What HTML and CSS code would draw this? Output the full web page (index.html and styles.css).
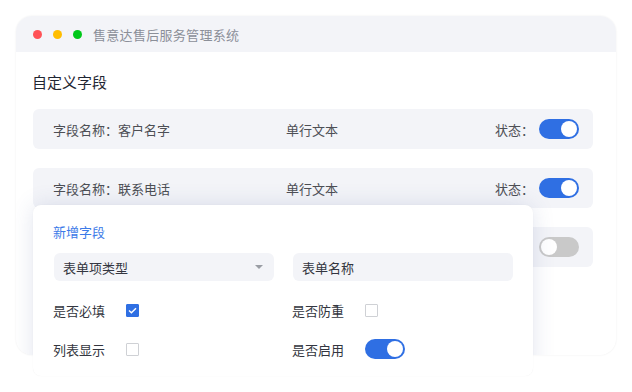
FILE: index.html
```html
<!DOCTYPE html>
<html lang="zh-CN">
<head>
    <meta charset="UTF-8">
    <title>售意达售后服务管理系统</title>
    <link rel="stylesheet" href="styles.css">
</head>
<body>
    <div class="page">
        <div class="window">
            <!-- Title bar -->
            <div class="titlebar">
                <span class="dot red"></span>
                <span class="dot yellow"></span>
                <span class="dot green"></span>
                <span class="title">售意达售后服务管理系统</span>
            </div>

            <!-- Field list -->
            <div class="content">
                <div class="heading">自定义字段</div>
                <div class="field-row">
                    <span class="field-name">字段名称：客户名字</span>
                    <span class="field-type">单行文本</span>
                    <span class="field-status">状态：<span class="switch on"></span></span>
                </div>
                <div class="field-row">
                    <span class="field-name">字段名称：联系电话</span>
                    <span class="field-type">单行文本</span>
                    <span class="field-status">状态：<span class="switch on"></span></span>
                </div>
                <!-- third row is mostly under the popup, only its switch shows -->
                <div class="field-row">
                    <span class="field-name"></span>
                    <span class="field-type"></span>
                    <span class="field-status"><span class="switch"></span></span>
                </div>
            </div>

            <!-- shadow of the popup, clipped to the window -->
            <div class="shade"><div class="shade-box"></div></div>

            <!-- Add field popup -->
            <div class="popup">
                <div class="popup-title">新增字段</div>
                <div class="form-grid">
                    <div class="select">表单项类型<span class="caret"></span></div>
                    <div class="input">表单名称</div>
                    <div class="option">
                        <span class="option-label">是否必填</span>
                        <span class="check checked">
                            <svg width="9" height="7" viewBox="0 0 9 7"><path d="M1 3.6 L3.4 5.8 L8 1.2" fill="none" stroke="#fff" stroke-width="1.4"/></svg>
                        </span>
                    </div>
                    <div class="option">
                        <span class="option-label">是否防重</span>
                        <span class="check"></span>
                    </div>
                    <div class="option">
                        <span class="option-label">列表显示</span>
                        <span class="check"></span>
                    </div>
                    <div class="option">
                        <span class="option-label">是否启用</span>
                        <span class="switch on"></span>
                    </div>
                </div>
            </div>
        </div>
    </div>
</body>
</html>
```

FILE: styles.css
```css
body {
    margin: 0;
    padding: 0;
    background: #ffffff;
    font-family: "Noto Sans CJK SC", "Noto Sans", sans-serif;
}

.page {
    height: 392px;
    box-sizing: border-box;
    padding: 16px 0 0 16px;
}

.window {
    position: relative;
    width: 600px;
    height: 339px;
    background: #ffffff;
    border-radius: 16px;
    box-shadow: 0 0 2px rgba(0, 0, 0, 0.08);
}

/* Title bar */
.titlebar {
    height: 36px;
    background: #f3f4f8;
    border-radius: 16px 16px 0 0;
    display: flex;
    align-items: center;
    padding-left: 17px;
}

.dot {
    flex: none;
    width: 9px;
    height: 9px;
    border-radius: 50%;
    margin-right: 11px;
}

.red { background: #ff5257; }
.yellow { background: #ffbd00; }
.green { background: #00c81a; }

.title {
    font-size: 13px;
    color: #8b8f98;
    letter-spacing: 0.3px;
}

/* Field list */
.content {
    padding: 19px 0 0 17px;
}

.heading {
    font-size: 15px;
    line-height: 22px;
    color: #1f2633;
    margin-left: -1px;
    margin-bottom: 16px;
}

.field-row {
    width: 560px;
    height: 40px;
    box-sizing: border-box;
    background: #f3f4f8;
    border-radius: 6px;
    display: flex;
    align-items: center;
    padding: 0 14px 0 20px;
    margin-bottom: 19px;
    font-size: 13px;
    color: #4d4f55;
}

.field-name {
    width: 233px;
}

.field-type {
    flex: 1;
}

.field-status {
    display: flex;
    align-items: center;
    gap: 5px;
}

/* Switch */
.switch {
    position: relative;
    display: inline-block;
    width: 40px;
    height: 20px;
    border-radius: 10px;
    background: #c9c9c9;
}

.switch::after {
    content: "";
    position: absolute;
    top: 2px;
    left: 2px;
    width: 16px;
    height: 16px;
    border-radius: 50%;
    background: #ffffff;
}

.switch.on {
    background: #2f6fe3;
}

.switch.on::after {
    left: 22px;
}

/* Popup shadow */
.shade {
    position: absolute;
    top: 0;
    left: 0;
    right: 0;
    bottom: 0;
    border-radius: 16px;
    overflow: hidden;
    pointer-events: none;
}

.shade-box {
    position: absolute;
    left: 17px;
    top: 189px;
    width: 500px;
    height: 171px;
    border-radius: 8px;
    box-shadow: 0 0 22px rgba(60, 80, 150, 0.15);
}

/* Popup */
.popup {
    position: absolute;
    left: 17px;
    top: 189px;
    width: 500px;
    height: 171px;
    box-sizing: border-box;
    background: #ffffff;
    border-radius: 8px;
    box-shadow: 0 0 1px rgba(0, 0, 0, 0.08);
    padding: 17px 20px 0 21px;
}

.popup-title {
    font-size: 13px;
    line-height: 20px;
    color: #3b7ae8;
    margin-left: -1px;
    margin-bottom: 11px;
}

.form-grid {
    display: grid;
    grid-template-columns: 220px 220px;
    column-gap: 19px;
    row-gap: 19px;
}

.select,
.input {
    height: 28px;
    box-sizing: border-box;
    background: #f3f4f8;
    border-radius: 6px;
    padding: 0 10px 0 9px;
    display: flex;
    align-items: center;
    font-size: 13px;
    color: #333640;
}

.select {
    justify-content: space-between;
}

.caret {
    width: 0;
    height: 0;
    border-left: 4px solid transparent;
    border-right: 4px solid transparent;
    border-top: 4px solid #9a9da4;
    margin-right: 1px;
}

.option {
    display: flex;
    align-items: center;
    height: 20px;
    font-size: 13px;
    color: #333640;
    margin-left: -1px;
}

.option-label {
    width: 73px;
}

.check {
    width: 13px;
    height: 13px;
    box-sizing: border-box;
    border: 1px solid #cfd1d5;
    border-radius: 1px;
    display: flex;
    align-items: center;
    justify-content: center;
}

.check.checked {
    background: #2f6fe3;
    border-color: #2f6fe3;
}
```
